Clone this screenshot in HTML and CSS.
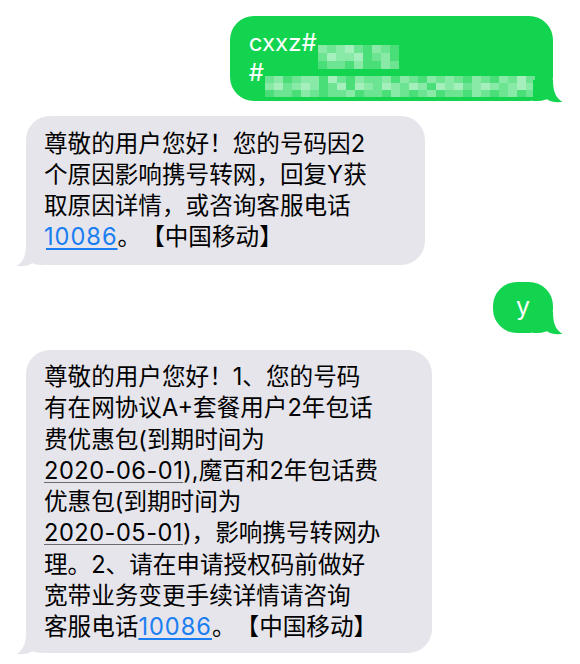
FILE: index.html
```html
<!DOCTYPE html>
<html lang="zh-CN">
<head>
<meta charset="utf-8">
<title>信息</title>
<link rel="stylesheet" href="styles.css">
</head>
<body>
<div class="thread">
  <div class="bubble out first">
    <div class="line">cxxz#<span class="blur b1"><i class="c"></i><i class="b"></i><i class="c"></i><i class="d"></i><i class="b"></i><i class="a"></i><i class="c"></i><i class="b"></i><i class="a"></i><i class="b"></i><i class="d"></i><i class="c"></i><i class="c"></i><i class="d"></i><i class="a"></i><i class="b"></i><i class="c"></i><i class="a"></i><i class="a"></i><i class="b"></i><i class="b"></i><i class="a"></i><i class="c"></i><i class="a"></i><i class="a"></i><i class="c"></i><i class="b"></i></span></div>
    <div class="line">#<span class="blur b2"><i class="b"></i><i class="c"></i><i class="a"></i><i class="b"></i><i class="c"></i><i class="c"></i><i class="a"></i><i class="d"></i><i class="b"></i><i class="a"></i><i class="c"></i><i class="b"></i><i class="b"></i><i class="c"></i><i class="a"></i><i class="c"></i><i class="b"></i><i class="a"></i><i class="c"></i><i class="b"></i><i class="c"></i><i class="b"></i><i class="a"></i><i class="c"></i><i class="b"></i><i class="a"></i><i class="c"></i><i class="b"></i><i class="d"></i><i class="b"></i><i class="c"></i><i class="d"></i><i class="b"></i><i class="c"></i><i class="d"></i><i class="c"></i><i class="a"></i><i class="b"></i><i class="d"></i><i class="a"></i><i class="d"></i><i class="c"></i><i class="b"></i><i class="d"></i><i class="c"></i><i class="b"></i><i class="d"></i><i class="c"></i><i class="a"></i><i class="d"></i><i class="c"></i><i class="d"></i><i class="b"></i><i class="c"></i><i class="d"></i><i class="c"></i><i class="b"></i><i class="c"></i><i class="d"></i><i class="c"></i><i class="a"></i><i class="b"></i><i class="b"></i><i class="a"></i><i class="c"></i><i class="b"></i><i class="a"></i><i class="b"></i><i class="b"></i><i class="c"></i><i class="a"></i><i class="b"></i><i class="b"></i><i class="a"></i><i class="c"></i><i class="b"></i><i class="a"></i><i class="b"></i><i class="c"></i><i class="a"></i><i class="b"></i><i class="b"></i><i class="a"></i><i class="c"></i><i class="b"></i><i class="a"></i><i class="b"></i><i class="c"></i><i class="a"></i><i class="b"></i></span></div>
    <svg class="tail tail-out" viewBox="0 0 30 23" width="30" height="23" aria-hidden="true"><path d="M0 0H20C20 11 22.5 18 29.5 21.8C23 22.8 17.5 21.6 14 19.2C10.5 20.5 6.5 21 1 21H0Z"/></svg>
  </div>

  <div class="bubble in msg1">
    <div class="text">尊敬的用户您好！您的号码因2<br>个原因影响携号转网，回复Y获<br>取原因详情，或咨询客服电话<br><span class="link">10086</span>。【中国移动】</div>
    <svg class="tail tail-in" viewBox="0 0 30 23" width="30" height="23" aria-hidden="true"><path d="M0 0H20C20 11 22.5 18 29.5 21.8C23 22.8 17.5 21.6 14 19.2C10.5 20.5 6.5 21 1 21H0Z"/></svg>
  </div>

  <div class="bubble out short">
    <span>y</span>
    <svg class="tail tail-out" viewBox="0 0 30 23" width="30" height="23" aria-hidden="true"><path d="M0 0H20C20 11 22.5 18 29.5 21.8C23 22.8 17.5 21.6 14 19.2C10.5 20.5 6.5 21 1 21H0Z"/></svg>
  </div>

  <div class="bubble in msg2">
    <div class="text">尊敬的用户您好！1、您的号码<br>有在网协议A+套餐用户2年包话<br>费优惠包(到期时间为<br><span class="date">2020-06-01</span>),魔百和2年包话费<br>优惠包(到期时间为<br><span class="date">2020-05-01</span>)，影响携号转网办<br>理。2、请在申请授权码前做好<br>宽带业务变更手续详情请咨询<br>客服电话<span class="link">10086</span>。【中国移动】</div>
    <svg class="tail tail-in" viewBox="0 0 30 23" width="30" height="23" aria-hidden="true"><path d="M0 0H20C20 11 22.5 18 29.5 21.8C23 22.8 17.5 21.6 14 19.2C10.5 20.5 6.5 21 1 21H0Z"/></svg>
  </div>
</div>
</body>
</html>
```
FILE: styles.css
```css
html, body {
  margin: 0;
  padding: 0;
  background: #ffffff;
}

body {
  width: 580px;
  height: 664px;
  overflow: hidden;
  font-family: "Inter", "Noto Sans CJK SC", sans-serif;
  -webkit-font-smoothing: antialiased;
  text-spacing-trim: space-all;
}

.thread {
  display: flex;
  flex-direction: column;
  padding: 16px 27px 0 26px;
}

.bubble {
  position: relative;
  border-radius: 24px;
  box-sizing: border-box;
}

.bubble.out {
  align-self: flex-end;
  background: #12d44f;
  color: #ffffff;
}

.bubble.in {
  align-self: flex-start;
  background: #e6e5eb;
  color: #000000;
}

.tail {
  position: absolute;
  bottom: -2px;
  display: block;
}

.tail-out {
  right: -10px;
  fill: #12d44f;
}

.tail-in {
  left: -10px;
  fill: #e6e5eb;
  transform: scaleX(-1);
}

/* first green message */
.first {
  padding: 12px 18px 13px 19px;
  font-size: 24px;
  line-height: 30px;
  height: 85px;
}

.line {
  white-space: nowrap;
  height: 30px;
}

.blur {
  display: inline-grid;
  vertical-align: -2px;
}

.b1 {
  grid-template-columns: repeat(9, 9px);
  grid-auto-rows: 8px;
  margin-left: 1px;
}

.b2 {
  grid-template-columns: repeat(30, 9px);
  grid-auto-rows: 7px;
  margin-left: 1px;
}

.blur i {
  display: block;
}

.blur .a { background: rgba(255, 255, 255, 0.24); }
.blur .b { background: rgba(255, 255, 255, 0.38); }
.blur .c { background: rgba(255, 255, 255, 0.5); }
.blur .d { background: rgba(255, 255, 255, 0.62); }

/* incoming messages */
.text {
  font-size: 23.6px;
  white-space: nowrap;
}

.msg1 {
  margin-top: 15px;
  width: 399px;
  padding: 12px 12px 13px 18px;
}

.msg1 .text {
  line-height: 31px;
}

.msg2 {
  margin-top: 17px;
  width: 406px;
  padding: 11px 12px 10px 18px;
}

.msg2 .text {
  line-height: 31.3px;
}

.link {
  color: #1a7ef2;
  letter-spacing: 1px;
  text-decoration: underline;
  text-decoration-thickness: 1.5px;
  text-underline-offset: 3px;
}

.date {
  letter-spacing: 0.5px;
  text-decoration: underline;
  text-decoration-color: #6b6b6b;
  text-decoration-thickness: 1.2px;
  text-underline-offset: 3px;
}

/* short "y" message */
.short {
  margin-top: 17px;
  width: 60px;
  height: 51px;
  display: flex;
  align-items: center;
  justify-content: center;
  font-size: 25px;
  padding-bottom: 4px;
}
```
